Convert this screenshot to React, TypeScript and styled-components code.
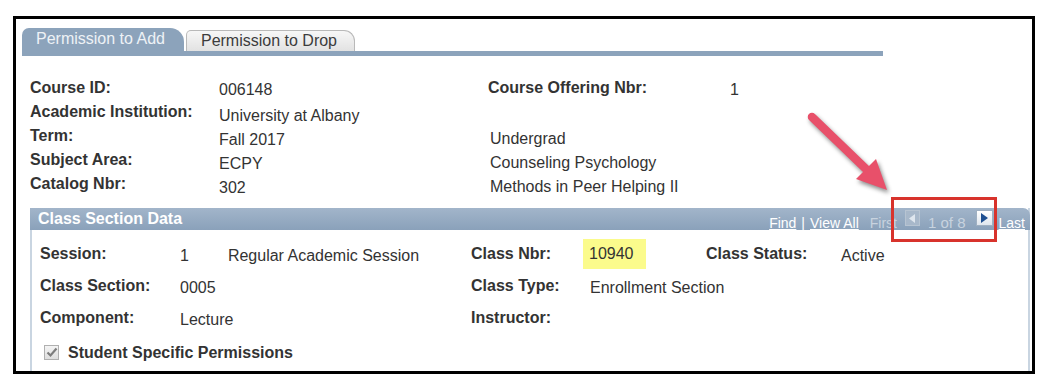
import styled, { createGlobalStyle } from "styled-components";

const GlobalStyle = createGlobalStyle`
  body {
    margin: 0;
    background: #fff;
    font-family: "Liberation Sans", Arial, sans-serif;
    color: #333;
  }
`;

// Screenshot frame (black border round the captured page)
const Frame = styled.div`
  position: relative;
  box-sizing: border-box;
  width: 1022px;
  height: 358px;
  margin: 16px 0 0 13px;
  border: 3px solid #000;
  padding: 9px 0 0 6px;
  overflow: hidden;
  background: #fff;
`;

const TabBar = styled.div`
  display: flex;
  align-items: flex-end;
  gap: 2px;
  width: 861px;
  border-bottom: 5px solid #8ca3bb;
`;

const Tab = styled.div<{ $active?: boolean }>`
  box-sizing: border-box;
  height: ${(p) => (p.$active ? "23px" : "21px")};
  font-size: 16px;
  line-height: ${(p) => (p.$active ? "22px" : "20px")};
  padding: ${(p) => (p.$active ? "0 19px 0 14px" : "0 17px 0 14px")};
  color: ${(p) => (p.$active ? "#eef2f6" : "#3c3c3c")};
  background: ${(p) =>
    p.$active ? "#8ca3bb" : "linear-gradient(#f7f7f7, #e2e2e2)"};
  border: ${(p) => (p.$active ? "none" : "1px solid #b9b9b9")};
  border-bottom: none;
  border-radius: ${(p) => (p.$active ? "7px 14px 0 0" : "5px 11px 0 0")};
  white-space: nowrap;
`;

const InfoRow = styled.div`
  display: grid;
  grid-template-columns: 187px 271px 242px auto;
  height: 24px;
  margin-left: 8px;

  &:first-of-type {
    margin-top: 20px;
  }
`;

const Label = styled.div`
  font-size: 16px;
  font-weight: 700;
  line-height: 24px;
  color: #333;
  white-space: nowrap;
`;

const Value = styled.div<{ $shift?: number }>`
  font-size: 16px;
  line-height: 24px;
  margin-top: ${(p) => p.$shift ?? 2}px;
  padding-left: ${(p) => (p.$shift === undefined ? 0 : 2)}px;
  color: #333;
  white-space: nowrap;
`;

const InfoBlock = styled.div`
  display: flex;
  flex-direction: column;
`;

const Section = styled.section`
  width: 1000px;
  margin: 12px 0 0 8px;
  box-sizing: border-box;
  border-left: 2px solid #c9d5e1;
  border-right: 2px solid #c9d5e1;
  height: 200px;
`;

const SectionHeader = styled.div`
  display: flex;
  align-items: center;
  justify-content: space-between;
  height: 22px;
  margin: 0 -2px;
  padding: 0 5px 0 8px;
  background: linear-gradient(#a2b5ca, #8aa1ba);
  border-radius: 0 7px 0 0;
`;

const SectionTitle = styled.div`
  font-size: 16px;
  font-weight: 700;
  color: #fff;
`;

const Nav = styled.div`
  display: flex;
  align-items: center;
  font-size: 14px;
  line-height: 16px;
  padding-top: 8px;
`;

const NavLink = styled.span<{ $ml?: number }>`
  color: #fff;
  text-decoration: underline;
  margin-left: ${(p) => p.$ml ?? 0}px;
`;

const NavText = styled.span<{ $ml?: number; $dim?: boolean; $big?: boolean }>`
  color: ${(p) => (p.$dim ? "#c8d3df" : "#fff")};
  font-size: ${(p) => (p.$big ? 15 : 14)}px;
  margin-left: ${(p) => p.$ml ?? 0}px;
`;

const NavButton = styled.span<{ $ml?: number; $enabled?: boolean }>`
  box-sizing: border-box;
  display: flex;
  align-items: center;
  justify-content: center;
  width: ${(p) => (p.$enabled ? 17 : 15)}px;
  height: 16px;
  margin-top: -10px;
  margin-left: ${(p) => p.$ml ?? 0}px;
  background: ${(p) =>
    p.$enabled ? "linear-gradient(#ffffff, #dfe6ee)" : "#a8b8ca"};
  border: 1px solid ${(p) => (p.$enabled ? "#9fb0c2" : "#b7c4d2")};
`;

const BodyGrid = styled.div`
  display: grid;
  grid-template-columns: 140px 291px 112px 123px 135px 1fr;
  grid-auto-rows: 32px;
  align-items: center;
  padding: 8px 0 0 8px;
`;

const BodyValue = styled.div<{ $pad?: boolean }>`
  display: flex;
  gap: 39px;
  font-size: 16px;
  margin-top: 4px;
  padding-left: ${(p) => (p.$pad ? 7 : 0)}px;
  white-space: nowrap;
`;

const Highlight = styled.div`
  justify-self: start;
  height: 30px;
  line-height: 30px;
  padding: 0 12px 0 6px;
  font-size: 16px;
  background: #fbfb8c;
`;

const CheckRow = styled.div`
  grid-column: 1 / -1;
  display: flex;
  align-items: center;
  gap: 9px;
  margin: 5px 0 0 4px;
  font-size: 16px;
  font-weight: 700;
`;

const CheckBox = styled.span`
  box-sizing: border-box;
  display: flex;
  align-items: center;
  justify-content: center;
  width: 15px;
  height: 15px;
  border: 1px solid #b0b0b0;
  background: linear-gradient(#f4f4f4, #dedede);
`;

// annotation overlays drawn over the screenshot
const Callout = styled.div`
  position: absolute;
  left: 875px;
  top: 178px;
  width: 106px;
  height: 45px;
  box-sizing: border-box;
  border: 3px solid #d8332c;
`;

const Arrow = styled.svg`
  position: absolute;
  left: 774px;
  top: 81px;
  width: 120px;
  height: 120px;
  overflow: visible;
  filter: drop-shadow(2px 3px 2px rgba(0, 0, 0, 0.45));
`;

const rows: [string, string, string?, string?][] = [
  ["Course ID:", "006148", "Course Offering Nbr:", "1"],
  ["Academic Institution:", "University at Albany"],
  ["Term:", "Fall 2017", "", "Undergrad"],
  ["Subject Area:", "ECPY", "", "Counseling Psychology"],
  ["Catalog Nbr:", "302", "", "Methods in Peer Helping II"],
];

export default function App() {
  return (
    <>
      <GlobalStyle />
      <Frame>
        <TabBar>
          <Tab $active>Permission to Add</Tab>
          <Tab>Permission to Drop</Tab>
        </TabBar>

        <InfoBlock>
          {rows.map(([l1, v1, l2, v2]) => (
            <InfoRow key={l1}>
              <Label>{l1}</Label>
              <Value $shift={l1 === "Course ID:" ? 2 : 4}>{v1}</Value>
              {l2 ? <Label>{l2}</Label> : v2 ? <Value $shift={3}>{v2}</Value> : <span />}
              {l2 && <Value>{v2}</Value>}
            </InfoRow>
          ))}
        </InfoBlock>

        <Section>
          <SectionHeader>
            <SectionTitle>Class Section Data</SectionTitle>
            <Nav>
              <NavLink>Find</NavLink>
              <NavText $ml={5}>|</NavText>
              <NavLink $ml={5}>View All</NavLink>
              <NavText $ml={11} $dim>First</NavText>
              <NavButton $ml={8}>
                <svg width="7" height="9" viewBox="0 0 7 9">
                  <path d="M6 0 L0 4.5 L6 9 Z" fill="#dfe6ee" />
                </svg>
              </NavButton>
              <NavText $ml={8} $dim $big>1 of 8</NavText>
              <NavButton $ml={10} $enabled>
                <svg width="7" height="10" viewBox="0 0 7 10">
                  <path d="M0 0 L7 5 L0 10 Z" fill="#1d4f91" />
                </svg>
              </NavButton>
              <NavLink $ml={6}>Last</NavLink>
            </Nav>
          </SectionHeader>

          <BodyGrid>
            <Label>Session:</Label>
            <BodyValue>
              <span>1</span>
              <span>Regular Academic Session</span>
            </BodyValue>
            <Label>Class Nbr:</Label>
            <Highlight>10940</Highlight>
            <Label>Class Status:</Label>
            <BodyValue>Active</BodyValue>

            <Label>Class Section:</Label>
            <BodyValue>0005</BodyValue>
            <Label>Class Type:</Label>
            <BodyValue $pad>Enrollment Section</BodyValue>
            <span />
            <span />

            <Label>Component:</Label>
            <BodyValue>Lecture</BodyValue>
            <Label>Instructor:</Label>
            <span />
            <span />
            <span />

            <CheckRow>
              <CheckBox>
                <svg width="12" height="11" viewBox="0 0 12 11">
                  <path
                    d="M1.5 5.5 L4.5 8.5 L10.5 1.5"
                    fill="none"
                    stroke="#7d7d7d"
                    strokeWidth="2.2"
                  />
                </svg>
              </CheckBox>
              Student Specific Permissions
            </CheckRow>
          </BodyGrid>
        </Section>

        <Callout />
        <Arrow viewBox="790 100 120 120">
          <line
            x1="812"
            y1="117"
            x2="866"
            y2="169"
            stroke="#e8506a"
            strokeWidth="8.5"
            strokeLinecap="round"
          />
          <path d="M887 190 L856 179 L876 159 Z" fill="#e8506a" />
        </Arrow>
      </Frame>
    </>
  );
}
